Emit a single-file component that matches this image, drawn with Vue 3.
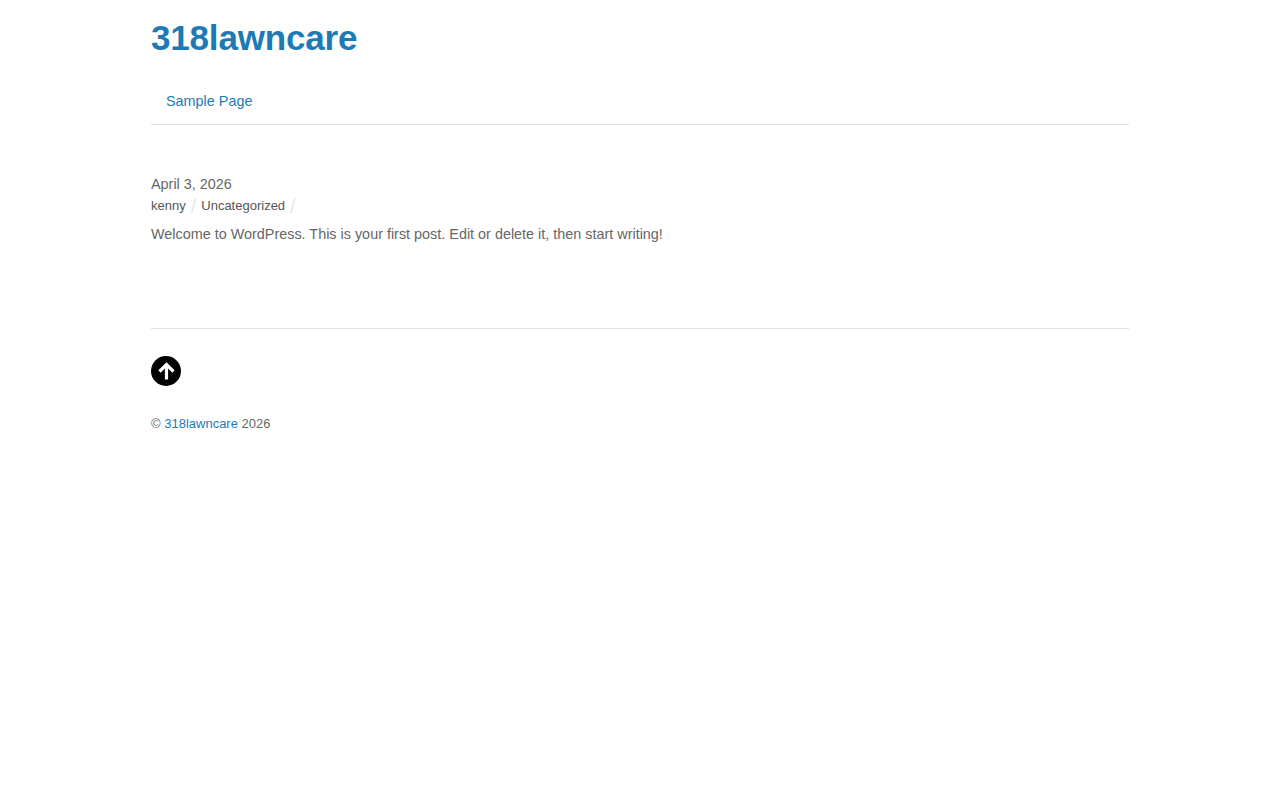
<template>
  <div class="site">
    <header class="site-header">
      <h1 class="site-title"><a href="#">318lawncare</a></h1>
      <nav class="main-nav">
        <a href="#">Sample Page</a>
      </nav>
    </header>

    <main class="content">
      <article v-for="post in posts" :key="post.id" class="post">
        <div class="post-date">{{ post.date }}</div>
        <ul class="post-meta">
          <li><a href="#">{{ post.author }}</a></li>
          <li><a href="#">{{ post.category }}</a></li>
        </ul>
        <p class="post-text">{{ post.text }}</p>
      </article>
    </main>

    <footer class="site-footer">
      <a href="#" class="to-top" aria-label="Back to top">
        <svg width="30" height="30" viewBox="0 0 30 30">
          <circle cx="15" cy="15" r="15" fill="#000" />
          <path d="M15.5 23.5V9.5M8.5 15.5L15.5 8.5L22.5 15.5" fill="none" stroke="#fff" stroke-width="3.2" />
        </svg>
      </a>
      <p class="copyright">© <a href="#">318lawncare</a> 2026</p>
    </footer>
  </div>
</template>

<script setup>
const posts = [
  {
    id: 1,
    date: 'April 3, 2026',
    author: 'kenny',
    category: 'Uncategorized',
    text: 'Welcome to WordPress. This is your first post. Edit or delete it, then start writing!'
  }
]
</script>

<style>
body {
  background: #fff;
}
</style>

<style scoped>
.site {
  width: 978px;
  margin: 0 auto;
  font-family: "Liberation Sans", Arial, sans-serif;
  font-size: 14.4px;
  color: #666;
}

a {
  color: #1e7ab5;
  text-decoration: none;
}

.site-header {
  border-bottom: 1px solid #e2e2e2;
}

.site-title {
  margin: 0;
  padding-top: 16px;
  font-size: 35px;
  letter-spacing: -0.18px;
  line-height: 44px;
  font-weight: 700;
}

.main-nav {
  margin-top: 20px;
  padding: 0 15px;
  height: 44px;
  line-height: 42px;
}

.content {
  padding-top: 51px;
  height: 152px;
  border-bottom: 1px solid #e2e2e2;
}

.post-date {
  line-height: 16px;
}

.post-meta {
  display: flex;
  margin: 6px 0 0;
  padding: 0;
  list-style: none;
  font-size: 13px;
  line-height: 16px;
}

.post-meta li {
  display: flex;
}

.post-meta li::after {
  content: "/";
  margin: 0 5px;
  color: #e8e8e8;
  font-size: 20px;
}

.post-meta a {
  color: #555;
}

.post-text {
  margin: 12px 0 0;
  line-height: 16px;
}

.site-footer {
  padding-top: 27px;
}

.to-top {
  display: block;
  width: 30px;
  height: 30px;
}

.to-top svg {
  display: block;
}

.copyright {
  margin: 30px 0 0;
  font-size: 13px;
  line-height: 16px;
}
</style>
